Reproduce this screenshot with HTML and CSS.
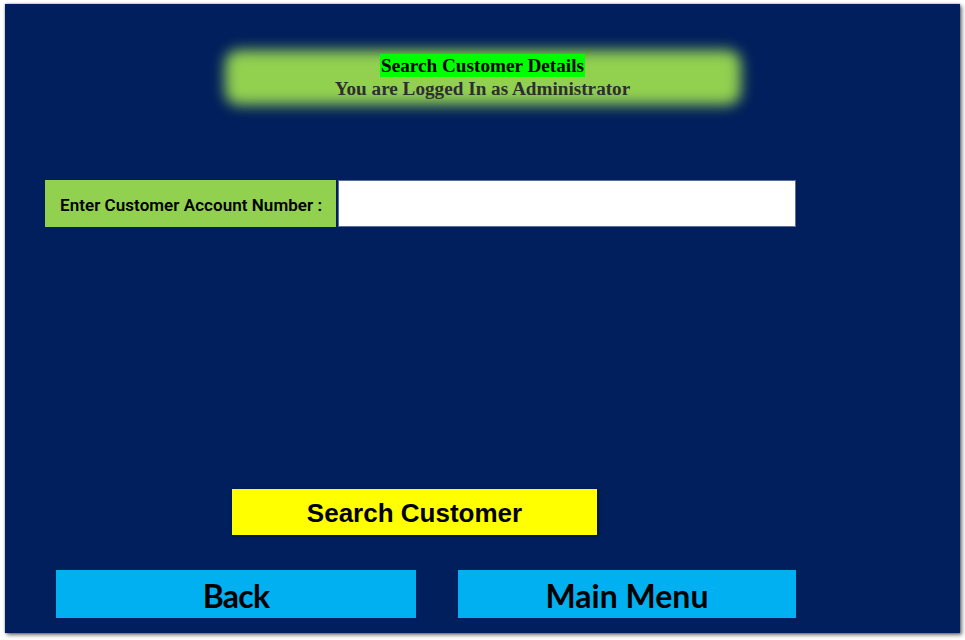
FILE: index.html
```html
<!DOCTYPE html>
<html>
<head>
<meta charset="utf-8">
<link rel="stylesheet" href="styles.css">
</head>
<body>
<div class="panel">
  <div class="header">
    <div class="title">Search Customer Details</div>
    <div class="subtitle">You are Logged In as Administrator</div>
  </div>
  <div class="form-row">
    <div class="label">Enter Customer Account Number :</div>
    <div class="input"></div>
  </div>
  <div class="search-row">
    <div class="search-btn">Search Customer</div>
  </div>
  <div class="nav-row">
    <div class="nav-btn back">Back</div>
    <div class="nav-btn menu">Main Menu</div>
  </div>
</div>
</body>
</html>
```
FILE: styles.css
```css
html, body {
  margin: 0;
  padding: 0;
  background: #ffffff;
}
body {
  width: 965px;
  height: 640px;
  overflow: hidden;
}
.panel {
  margin: 4px 0 0 5px;
  width: 955px;
  height: 629px;
  background: #001f5c;
  box-shadow: 2px 2px 4px rgba(0,0,0,0.55), 0 0 2px rgba(0,0,0,0.4);
  display: flex;
  flex-direction: column;
  box-sizing: border-box;
}
.header {
  position: relative;
  z-index: 0;
  margin: 50px auto 0;
  width: 490px;
  display: flex;
  flex-direction: column;
  align-items: center;
  font-family: "Liberation Serif", "Times New Roman", serif;
  font-weight: bold;
  font-size: 19.2px;
  line-height: 23px;
}
.header::before {
  content: "";
  position: absolute;
  top: -4px;
  bottom: -5px;
  left: -13px;
  right: -13px;
  border-radius: 14px;
  background: #92d050;
  filter: blur(7px);
  z-index: -1;
}
.title {
  background: #00ff00;
  color: #000;
  padding: 0 1px;
}
.subtitle {
  color: #2e2e2e;
}
.form-row {
  display: flex;
  margin: 80px 0 0 40px;
  height: 47px;
  gap: 2px;
}
.label {
  width: 291px;
  background: #92d050;
  display: flex;
  align-items: center;
  padding: 3px 0 0 15px;
  box-sizing: border-box;
  font-family: Roboto, "Liberation Sans", sans-serif;
  font-weight: 600;
  font-size: 17px;
  letter-spacing: 0.05px;
  color: #000;
}
.input {
  width: 458px;
  background: #ffffff;
  border: 1px solid #5a6e9a;
  box-sizing: border-box;
}
.search-row {
  display: flex;
  margin: 262px 0 0 227px;
}
.search-btn {
  width: 365px;
  height: 46px;
  padding-top: 2px;
  box-sizing: border-box;
  background: #ffff00;
  box-shadow: 1px 1px 3px rgba(0,0,0,0.5);
  display: flex;
  align-items: center;
  justify-content: center;
  font-family: "Liberation Sans", Arial, sans-serif;
  font-weight: bold;
  font-size: 26px;
  color: #000;
}
.nav-row {
  display: flex;
  margin: 35px 0 0 51px;
  gap: 42px;
}
.nav-btn {
  height: 48px;
  padding-top: 3px;
  box-sizing: border-box;
  background: #00b0f0;
  display: flex;
  align-items: center;
  justify-content: center;
  font-family: Lato, "Liberation Sans", sans-serif;
  font-weight: bold;
  font-size: 32px;
  color: #000;
}
.back {
  width: 360px;
  letter-spacing: -0.8px;
}
.menu {
  width: 338px;
}
```
